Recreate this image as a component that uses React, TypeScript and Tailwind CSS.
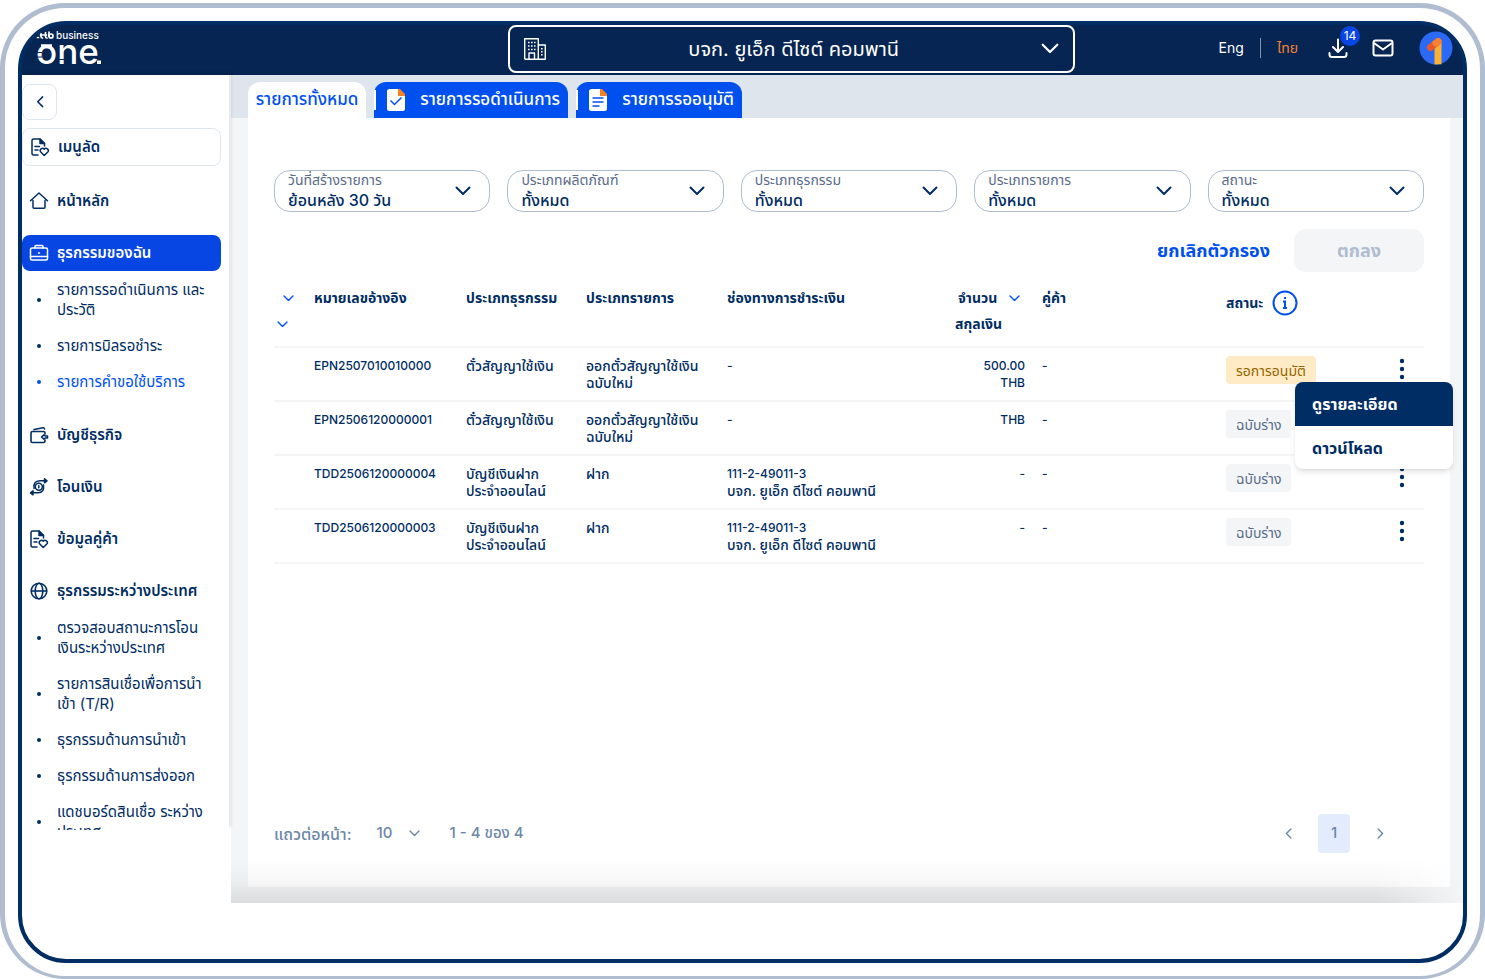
import { ReactNode, useState } from "react";

type IconProps = { className?: string };

const FILTERS = [
  { id: "created", label: "วันที่สร้างรายการ", value: "ย้อนหลัง 30 วัน" },
  { id: "product", label: "ประเภทผลิตภัณฑ์", value: "ทั้งหมด" },
  { id: "transaction", label: "ประเภทธุรกรรม", value: "ทั้งหมด" },
  { id: "type", label: "ประเภทรายการ", value: "ทั้งหมด" },
  { id: "status", label: "สถานะ", value: "ทั้งหมด" },
];

const ROWS = [
  {
    id: "EPN2507010010000",
    transaction: ["ตั๋วสัญญาใช้เงิน"],
    type: ["ออกตั๋วสัญญาใช้เงิน", "ฉบับใหม่"],
    channel: ["-"],
    amount: ["500.00", "THB"],
    status: "รอการอนุมัติ",
    pending: true,
  },
  {
    id: "EPN2506120000001",
    transaction: ["ตั๋วสัญญาใช้เงิน"],
    type: ["ออกตั๋วสัญญาใช้เงิน", "ฉบับใหม่"],
    channel: ["-"],
    amount: ["THB"],
    status: "ฉบับร่าง",
    pending: false,
  },
  {
    id: "TDD2506120000004",
    transaction: ["บัญชีเงินฝาก", "ประจำออนไลน์"],
    type: ["ฝาก"],
    channel: ["111-2-49011-3", "บจก. ยูเอ็ก ดีไซต์ คอมพานี"],
    amount: ["-"],
    status: "ฉบับร่าง",
    pending: false,
  },
  {
    id: "TDD2506120000003",
    transaction: ["บัญชีเงินฝาก", "ประจำออนไลน์"],
    type: ["ฝาก"],
    channel: ["111-2-49011-3", "บจก. ยูเอ็ก ดีไซต์ คอมพานี"],
    amount: ["-"],
    status: "ฉบับร่าง",
    pending: false,
  },
];

function Chevron({ className }: IconProps) {
  return (
    <svg viewBox="0 0 16 10" fill="none" stroke="currentColor" strokeWidth="2" strokeLinecap="round" strokeLinejoin="round" className={className} aria-hidden="true">
      <path d="M1.500 1.500 8 8l6.500-6.500" />
    </svg>
  );
}

function Logo() {
  return (
    <svg viewBox="0 0 68 44" className="block h-11 w-[68px] text-white" role="img" aria-label="ttb business one">
      <g fill="none" stroke="currentColor" strokeWidth="1.700" strokeLinecap="round">
        <path d="M1.500 9.500h1M5 5.500v3q0 1.500 1.500 1.500M9.500 4.500v4q0 1.500 1.500 1.500M4.500 7h6M13 4v4" />
        <circle cx="15" cy="8" r="2" />
      </g>
      <text x="20" y="10.500" fontSize="10" fontWeight="500" fill="currentColor" className="font-['Inter',sans-serif]">
        business
      </text>
      <text x="0" y="36" fontSize="35" fontWeight="500" fill="currentColor" className="font-['Inter',sans-serif]">
        one
      </text>
      <path d="M5 17.500h11" stroke="currentColor" strokeWidth="2.500" />
      <path d="M0 24.500h6M0 29h6M22 31.500h7" stroke="#062552" strokeWidth="1.200" />
      <path d="M61 32.500h4v3.500h-4z" fill="currentColor" />
    </svg>
  );
}

function BuildingIcon() {
  return (
    <svg viewBox="0 0 22 22" fill="none" stroke="currentColor" strokeWidth="1.400" className="size-[22px]" aria-hidden="true">
      <path d="M.7 21.300V.7h13.600v20.600M14.300 7h7v14.300H.7M5 21v-6h5.500v6" strokeLinejoin="round" />
      <path d="M4 4.500h7.500M4 8h7.500M4 11.500h7.500M17.800 10v9" strokeWidth="1.600" strokeDasharray="1.600 1.400" />
    </svg>
  );
}

function DocHeartIcon() {
  return (
    <svg viewBox="0 0 20 20" fill="none" stroke="currentColor" strokeWidth="1.500" strokeLinecap="round" strokeLinejoin="round" className="size-5" aria-hidden="true">
      <path d="M8 18H3.500a1.500 1.500 0 0 1-1.500-1.500v-13A1.500 1.500 0 0 1 3.500 2H10l4.500 4.500V9" />
      <path d="M10 2v4.500h4.500z" fill="currentColor" />
      <path d="M5 9.500h4.500M5 13h3" />
      <path d="M14.200 18.500 10.800 15a2.200 2.200 0 0 1 3.400-2.800 2.200 2.200 0 0 1 3.600 2.800z" />
    </svg>
  );
}

function HomeIcon() {
  return (
    <svg viewBox="0 0 20 20" fill="none" stroke="currentColor" strokeWidth="1.500" strokeLinecap="round" strokeLinejoin="round" className="size-5" aria-hidden="true">
      <path d="M1.500 9.700 10 2l8.500 7.700M4 9.500v6.800a1 1 0 0 0 1 1h10a1 1 0 0 0 1-1V9.500" />
    </svg>
  );
}

function BriefcaseIcon() {
  return (
    <svg viewBox="0 0 20 20" fill="none" stroke="currentColor" strokeWidth="1.500" strokeLinecap="round" strokeLinejoin="round" className="size-5" aria-hidden="true">
      <rect x="1.500" y="5" width="17" height="12" rx="1.500" />
      <path d="M6 5V3.500a1 1 0 0 1 1-1h6a1 1 0 0 1 1 1V5M1.500 13.500h17M9.500 10h1" />
    </svg>
  );
}

function WalletIcon() {
  return (
    <svg viewBox="0 0 20 20" fill="none" stroke="currentColor" strokeWidth="1.600" strokeLinecap="round" strokeLinejoin="round" className="size-5" aria-hidden="true">
      <path d="M16 9V8a1.500 1.500 0 0 0-1.500-1.500h-11A1.500 1.500 0 0 0 2 8v8a1.500 1.500 0 0 0 1.500 1.500h11A1.500 1.500 0 0 0 16 16v-1M5 4.500l9-1.700q1.500-.2 1.500 1.200" />
      <path d="M15 9.800 12.500 12l2.500 2.200 1.200-1.200h2.300v-2h-2.300z" />
    </svg>
  );
}

function TransferIcon() {
  return (
    <svg viewBox="0 0 20 20" fill="none" stroke="currentColor" strokeWidth="1.500" strokeLinecap="round" strokeLinejoin="round" className="size-5" aria-hidden="true">
      <circle cx="9.800" cy="9.800" r="3.500" />
      <path d="M9.800 8.800v2M5 11.500Q4 4 11 3.800h5.500M14.500 8q1 7.500-5.500 7.800H3" />
      <path d="m15.500 1.800 2.500 2-2.500 2zM4 13.800l-2.500 2 2.500 2z" fill="currentColor" />
    </svg>
  );
}

function GlobeIcon() {
  return (
    <svg viewBox="0 0 20 20" fill="none" stroke="currentColor" strokeWidth="1.600" className="size-5" aria-hidden="true">
      <circle cx="10" cy="10" r="7.800" />
      <ellipse cx="10" cy="10" rx="3.800" ry="7.800" />
      <path d="M2.200 10h15.600" />
    </svg>
  );
}

function MenuLink({ icon, label, className }: { icon: ReactNode; label: string; className?: string }) {
  return (
    <a href="#" className={`flex items-center gap-2 pl-[7px] text-[15px] font-semibold ${className ?? "mb-4 h-9"}`}>
      {icon}
      {label}
    </a>
  );
}

function Lines({ lines }: { lines: string[] }) {
  return (
    <span className="block whitespace-nowrap">
      {lines.map((line) => (
        <span key={line} className={/^[\x20-\x7e]+$/.test(line) ? "block text-xs leading-[17px]" : "block"}>
          {line}
        </span>
      ))}
    </span>
  );
}

function SubLink({ lines, active }: { lines: string[]; active?: boolean }) {
  return (
    <li>
      <a href="#" className={`flex items-center py-2 pl-[15px] text-[15px] leading-5 ${active ? "text-[#0050f0]" : ""}`}>
        <span className="mr-4 size-1 shrink-0 rounded-full bg-current" />
        <Lines lines={lines} />
      </a>
    </li>
  );
}

function Sidebar() {
  return (
    <aside className="z-10 w-[209px] shrink-0 bg-white">
      <nav aria-label="เมนูหลัก" className="mr-0.5 h-[755px] overflow-hidden bg-white pt-[9px] shadow-[2px_-3px_3px_rgba(0,20,60,0.12)]">
        <button type="button" aria-label="ย่อเมนู" className="mb-2 flex h-9 w-[35px] items-center justify-center rounded-lg border border-[#dfe5ec]">
          <Chevron className="w-3 rotate-90" />
        </button>
        <MenuLink icon={<DocHeartIcon />} label="เมนูลัด" className="mr-2 mb-[17px] h-[38px] rounded-lg border border-[#dfe5ec]" />
        <MenuLink icon={<HomeIcon />} label="หน้าหลัก" />
        <MenuLink icon={<BriefcaseIcon />} label="ธุรกรรมของฉัน" className="mr-2 h-9 rounded-lg bg-[#0846e4] text-white" />
        <ul className="mb-[17px] pt-px">
          <SubLink lines={["รายการรอดำเนินการ และ", "ประวัติ"]} />
          <SubLink lines={["รายการบิลรอชำระ"]} />
          <SubLink lines={["รายการคำขอใช้บริการ"]} active />
        </ul>
        <MenuLink icon={<WalletIcon />} label="บัญชีธุรกิจ" />
        <MenuLink icon={<TransferIcon />} label="โอนเงิน" />
        <MenuLink icon={<DocHeartIcon />} label="ข้อมูลคู่ค้า" />
        <MenuLink icon={<GlobeIcon />} label="ธุรกรรมระหว่างประเทศ" className="h-9" />
        <ul className="pt-px">
          <SubLink lines={["ตรวจสอบสถานะการโอน", "เงินระหว่างประเทศ"]} />
          <SubLink lines={["รายการสินเชื่อเพื่อการนำ", "เข้า (T/R)"]} />
          <SubLink lines={["ธุรกรรมด้านการนำเข้า"]} />
          <SubLink lines={["ธุรกรรมด้านการส่งออก"]} />
          <SubLink lines={["แดชบอร์ดสินเชื่อ ระหว่าง", "ประเทศ"]} />
        </ul>
      </nav>
    </aside>
  );
}

function Header() {
  return (
    <header className="flex h-[50px] shrink-0 items-center bg-[#062552] pr-[10px] pb-1 pl-[14px] text-white">
      <div className="flex-5 pt-1">
        <Logo />
      </div>
      <button type="button" className="mt-0.5 flex h-12 w-[567px] items-center rounded-lg border-2 border-white px-[14px] text-xl">
        <BuildingIcon />
        <span className="flex-1">บจก. ยูเอ็ก ดีไซต์ คอมพานี</span>
        <Chevron className="w-[18px]" />
      </button>
      <div className="flex flex-4 items-center justify-end">
        <button type="button" className="text-sm">
          Eng
        </button>
        <span className="mx-4 h-5 w-px bg-[#8292a9]" />
        <button type="button" className="text-sm text-[#f58232]">
          ไทย
        </button>
        <button type="button" aria-label="ดาวน์โหลด 14 รายการ" className="relative mr-6 ml-[30px]">
          <svg viewBox="0 0 20 20" fill="none" stroke="currentColor" strokeWidth="2" strokeLinecap="round" strokeLinejoin="round" className="size-5" aria-hidden="true">
            <path d="M10 1.500v12M5 9l5 5 5-5M1.500 15v1.500A2.500 2.500 0 0 0 4 19h12a2.500 2.500 0 0 0 2.500-2.500V15" />
          </svg>
          <span className="absolute -top-3 left-3 flex size-5 items-center justify-center rounded-full bg-[#0846e4] text-xs">14</span>
        </button>
        <button type="button" aria-label="ข้อความ">
          <svg viewBox="0 0 22 18" fill="none" stroke="currentColor" strokeWidth="2" strokeLinejoin="round" className="w-[22px]" aria-hidden="true">
            <rect x="1.500" y="1.500" width="19" height="15" rx="2" />
            <path d="m2 4 9 6.500L20 4" />
          </svg>
        </button>
        <button type="button" aria-label="โปรไฟล์" className="ml-[25px]">
          <svg viewBox="0 0 34 34" className="size-[34px]" aria-hidden="true">
            <circle cx="17" cy="17" r="16.500" fill="#2b6af7" />
            <path d="M15.500 14.500 19 7q3.500 0 3.500 4v22.200l-7 .3z" fill="#fcb034" />
            <path d="M11.500 16.500 19 10.500" stroke="#e9592f" strokeWidth="7" strokeLinecap="round" />
            <path d="M17 12 19 10.500" stroke="#f58232" strokeWidth="7" strokeLinecap="round" />
          </svg>
        </button>
      </div>
    </header>
  );
}

function Tabs() {
  return (
    <div role="tablist" className="flex h-[43px] items-end gap-2 bg-[#dfe5ec] pl-[17px] text-[17px] font-medium">
      <button type="button" role="tab" aria-selected="true" className="h-9 w-[118px] rounded-t-xl bg-white text-[#0050f0]">
        รายการทั้งหมด
      </button>
      <button type="button" role="tab" aria-selected="false" className="flex h-9 w-[194px] items-center rounded-t-xl bg-[#0050f0] pr-2 text-white">
        <span className="h-5 w-0.5 bg-white" />
        <svg viewBox="0 0 18 22" className="ml-[11px] w-[18px]" aria-hidden="true">
          <path d="M2.500 0H11l7 7v12.500a2.500 2.500 0 0 1-2.500 2.500h-13A2.500 2.500 0 0 1 0 19.500v-17A2.500 2.500 0 0 1 2.500 0z" fill="#fff" />
          <path d="M11 0h2l5 5v2h-7z" fill="#f58220" />
          <path d="m3.500 11.500 4 4 7-7" fill="none" stroke="#0050f0" strokeWidth="1.500" />
        </svg>
        <span className="flex-1 text-right">รายการรอดำเนินการ</span>
      </button>
      <button type="button" role="tab" aria-selected="false" className="flex h-9 w-[166px] items-center rounded-t-xl bg-[#0050f0] pr-2 text-white">
        <span className="h-5 w-0.5 bg-white" />
        <svg viewBox="0 0 18 22" className="ml-[11px] w-[18px]" aria-hidden="true">
          <path d="M2.500 0H11l7 7v12.500a2.500 2.500 0 0 1-2.500 2.500h-13A2.500 2.500 0 0 1 0 19.500v-17A2.500 2.500 0 0 1 2.500 0z" fill="#fff" />
          <path d="M11 0h2l5 5v2h-7z" fill="#f58220" />
          <path d="M3.500 9h11M3.500 13h11M3.500 17h7" fill="none" stroke="#0050f0" strokeWidth="1.500" />
        </svg>
        <span className="flex-1 text-right">รายการรออนุมัติ</span>
      </button>
    </div>
  );
}

function Filters() {
  return (
    <form>
      <div className="grid grid-cols-5 gap-[17px]">
        {FILTERS.map((filter) => (
          <div key={filter.id} className="relative h-[42px] rounded-2xl border border-[#b0bccf] px-[13px]">
            <label htmlFor={filter.id} className="block h-[18px] text-sm leading-[18px] text-[#5a6b88]">
              {filter.label}
            </label>
            <select id={filter.id} className="block h-[22px] w-full appearance-none bg-transparent text-base leading-[22px] font-medium outline-none">
              <option>{filter.value}</option>
            </select>
            <Chevron className="pointer-events-none absolute top-[15px] right-[18px] w-4" />
          </div>
        ))}
      </div>
      <div className="mt-[17px] flex items-center justify-end gap-6 text-lg font-bold">
        <button type="reset" className="text-[#0050f0]">
          ยกเลิกตัวกรอง
        </button>
        <button type="submit" disabled className="h-[43px] w-[130px] rounded-xl bg-[#f3f5f7] text-[#b0bccf]">
          ตกลง
        </button>
      </div>
    </form>
  );
}

function RowMenu() {
  return (
    <div role="menu" className="absolute top-[34px] -right-[29px] z-20 w-[158px] overflow-hidden rounded-lg bg-white text-left text-base font-bold shadow-md">
      <button type="button" role="menuitem" className="block h-11 w-full bg-[#002d63] px-[17px] text-left text-white">
        ดูรายละเอียด
      </button>
      <button type="button" role="menuitem" className="block h-[43px] w-full px-[17px] text-left">
        ดาวน์โหลด
      </button>
    </div>
  );
}

function TransactionTable() {
  const [openRow, setOpenRow] = useState<string | null>(ROWS[0].id);

  return (
    <table className="mt-[11px] w-full table-fixed text-left text-sm leading-[17px] font-medium">
      <colgroup>
        <col className="w-[40px]" />
        <col className="w-[152px]" />
        <col className="w-[120px]" />
        <col className="w-[141px]" />
        <col />
        <col className="w-[100px]" />
        <col className="w-[184px]" />
        <col className="w-[130px]" />
        <col className="w-[68px]" />
      </colgroup>
      <thead>
        <tr className="h-16 border-b-2 border-[#f3f5f7] align-top leading-[26px] font-bold">
          <td className="pt-0.5">
            <button type="button" aria-label="เรียงตามวันที่" className="ml-[9px] flex h-[26px] items-center text-[#0050f0]">
              <Chevron className="w-[11px]" />
            </button>
            <button type="button" aria-label="เรียงตามหมายเลข" className="ml-[3px] flex h-[26px] items-center text-[#0050f0]">
              <Chevron className="w-[11px]" />
            </button>
          </td>
          <th scope="col" className="pt-0.5">หมายเลขอ้างอิง</th>
          <th scope="col" className="pt-0.5">ประเภทธุรกรรม</th>
          <th scope="col" className="pt-0.5">ประเภทรายการ</th>
          <th scope="col" className="pt-0.5">ช่องทางการชำระเงิน</th>
          <th scope="col" className="pt-0.5 pl-[13px]">
            <span className="flex items-center gap-3 pl-[3px]">
              จำนวน
              <button type="button" aria-label="เรียงตามจำนวน" className="text-[#0050f0]">
                <Chevron className="w-[11px]" />
              </button>
            </span>
            สกุลเงิน
          </th>
          <th scope="col" className="pt-0.5">คู่ค้า</th>
          <th scope="col" className="pt-[7px]">
            <span className="flex items-center gap-[9px]">
              สถานะ
              <button type="button" aria-label="ข้อมูลสถานะ" className="text-[#0050f0]">
                <svg viewBox="0 0 26 26" fill="none" stroke="currentColor" strokeWidth="2" className="size-[26px]" aria-hidden="true">
                  <circle cx="13" cy="13" r="11.500" />
                  <path d="M11 11.500h2V18M11 18h4M13 7v2" />
                </svg>
              </button>
            </span>
          </th>
          <td />
        </tr>
      </thead>
      <tbody>
        {ROWS.map((row) => (
          <tr key={row.id} className="h-[54px] border-b-2 border-[#f3f5f7] align-top">
            <td />
            <td className="pt-[9px]"><Lines lines={[row.id]} /></td>
            <td className="pt-[9px]"><Lines lines={row.transaction} /></td>
            <td className="pt-[9px]"><Lines lines={row.type} /></td>
            <td className="pt-[9px]"><Lines lines={row.channel} /></td>
            <td className="pt-[9px] pr-[17px] text-right"><Lines lines={row.amount} /></td>
            <td className="pt-[9px]"><Lines lines={["-"]} /></td>
            <td className="pt-2">
              <span
                className={`inline-flex h-7 items-center rounded-sm px-[10px] font-normal ${
                  row.pending ? "bg-[#ffebc5] text-[#966400]" : "bg-[#f3f5f7] text-[#5a6b88]"
                }`}
              >
                {row.status}
              </span>
            </td>
            <td className="relative pt-[9px] pr-[18px] text-right">
              <button
                type="button"
                aria-label={`ตัวเลือก ${row.id}`}
                aria-expanded={openRow === row.id}
                onClick={() => setOpenRow(openRow === row.id ? null : row.id)}
              >
                <svg viewBox="0 0 8 24" fill="currentColor" className="h-6 w-2" aria-hidden="true">
                  <circle cx="4" cy="4" r="2.200" />
                  <circle cx="4" cy="12" r="2.200" />
                  <circle cx="4" cy="20" r="2.200" />
                </svg>
              </button>
              {openRow === row.id && <RowMenu />}
            </td>
          </tr>
        ))}
      </tbody>
    </table>
  );
}

function Pagination() {
  return (
    <footer className="mt-auto flex items-center text-[15px] font-medium text-[#6c87a8]">
      <label htmlFor="page-size" className="text-base">แถวต่อหน้า:</label>
      <span className="relative ml-[25px] w-[43px]">
        <select id="page-size" className="w-full appearance-none bg-transparent outline-none">
          <option>10</option>
        </select>
        <Chevron className="pointer-events-none absolute top-2 right-0 w-[11px]" />
      </span>
      <span className="ml-[30px] flex-1">1 - 4 ของ 4</span>
      <button type="button" aria-label="หน้าก่อนหน้า" className="flex h-8 w-5 items-center justify-center">
        <Chevron className="w-[11px] rotate-90" />
      </button>
      <button type="button" aria-current="page" className="mx-5 h-[39px] w-8 rounded-sm bg-[#e2ecfc]">
        1
      </button>
      <button type="button" aria-label="หน้าถัดไป" className="mr-[34px] flex h-8 w-5 items-center justify-center">
        <Chevron className="w-[11px] -rotate-90" />
      </button>
    </footer>
  );
}

export default function App() {
  return (
    <div className="flex min-h-screen flex-col bg-white pt-[3px] font-['Inter','Noto_Sans_Thai',sans-serif] text-[#002d63]">
      <div className="flex flex-1 flex-col rounded-[65px] border-5 border-b-3 border-[#b0bccf] p-[13px]">
        <div className="flex flex-1 flex-col overflow-hidden rounded-[48px] border-4 border-[#002d63] bg-linear-to-b from-[#002d63] from-5% to-white to-5%">
          <Header />
          <div className="mb-14 flex flex-1">
            <Sidebar />
            <main className="relative flex min-w-0 flex-1 flex-col bg-[#f3f5f7]">
              <Tabs />
              <section className="mr-[13px] mb-4 ml-[17px] flex flex-1 flex-col bg-white px-[26px] pt-[52px] pb-[34px]">
                <Filters />
                <TransactionTable />
                <Pagination />
              </section>
              <div className="pointer-events-none absolute inset-x-0 bottom-0 h-11 bg-linear-to-t from-black/10 via-black/3 to-transparent [mask-image:linear-gradient(to_right,black_93%,transparent)]" />
            </main>
          </div>
        </div>
      </div>
    </div>
  );
}
